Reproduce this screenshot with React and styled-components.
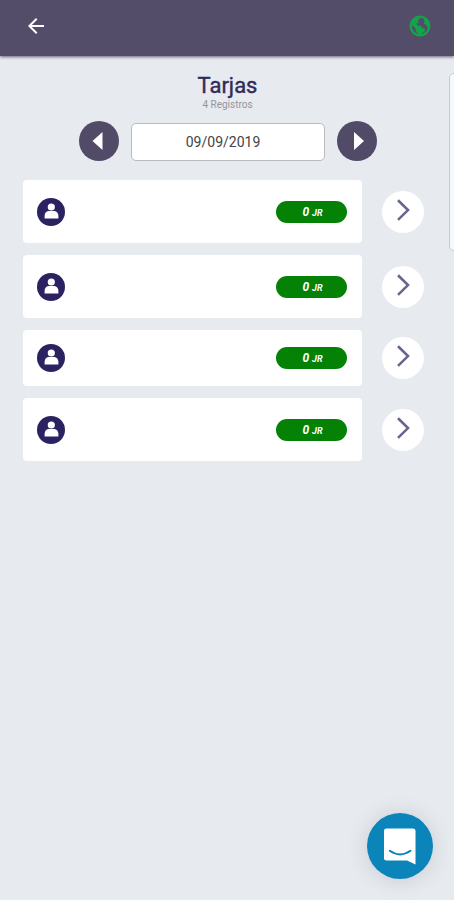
import React, { useState } from "react";
import styled, { createGlobalStyle } from "styled-components";
import { MdArrowBack } from "react-icons/md";

const GlobalStyle = createGlobalStyle`
  *, *::before, *::after { box-sizing: border-box; }
  body {
    margin: 0;
    background: #e7eaef;
    font-family: Roboto, "Liberation Sans", sans-serif;
    overflow-x: hidden;
  }
  button { border: 0; padding: 0; font: inherit; cursor: pointer; }
`;

const Page = styled.div`
  position: relative;
  min-height: 100vh;
  overflow: hidden;
  background: #e7eaef;
`;

const TopBar = styled.header`
  display: flex;
  align-items: center;
  justify-content: space-between;
  height: 56px;
  padding: 0 22px 4px 24px;
  background: #544d69;
  box-shadow: 0 1px 3px rgba(50, 40, 70, 0.7);
`;

const BarButton = styled.button`
  display: flex;
  background: none;
  color: ${({ $color }) => $color};
`;

const Heading = styled.div`
  display: flex;
  flex-direction: column;
  align-items: center;
  padding: 17px 0 0 1px;
`;

const Title = styled.h1`
  margin: 0;
  color: #312b5a;
  font-size: 22px;
  font-weight: 400;
  line-height: 26px;
  -webkit-text-stroke: 0.4px #312b5a;
`;

const Count = styled.p`
  margin: 0;
  color: #95969d;
  font-size: 10px;
  line-height: 12px;
`;

const DateNav = styled.div`
  display: flex;
  justify-content: center;
  align-items: center;
  gap: 12px;
  margin-top: 9px;
  padding: 0 24px 0 26px;
`;

const RoundButton = styled.button`
  display: flex;
  flex: none;
  width: 40px;
  height: 40px;
  border-radius: 50%;
  background: #514b68;
`;

const DateInput = styled.input`
  width: 194px;
  min-width: 0;
  height: 38px;
  margin-top: 3px;
  padding: 0 10px 0 0;
  border: 1px solid #b9bbc0;
  border-radius: 5px;
  background: #fff;
  color: #444;
  font-family: inherit;
  font-size: 14px;
  text-align: center;
`;

const List = styled.ul`
  display: flex;
  flex-direction: column;
  gap: 12px;
  margin: 0;
  padding: 19px 30px 24px 23px;
  list-style: none;
`;

const Row = styled.li`
  display: flex;
  align-items: center;
  gap: 20px;
`;

const Card = styled.div`
  display: flex;
  flex: 1;
  align-items: center;
  justify-content: space-between;
  height: ${({ $compact }) => ($compact ? 56 : 63)}px;
  padding: 0 15px 0 14px;
  border-radius: 4px;
  background: #fff;
`;

const Badge = styled.span`
  display: flex;
  align-items: baseline;
  justify-content: center;
  gap: 3px;
  width: 71px;
  height: 22px;
  padding-left: 2px;
  border-radius: 11px;
  background: #058205;
  color: #fff;
  font-size: 12px;
  font-style: italic;
  font-weight: 700;
  line-height: 23px;
`;

const Unit = styled.small`
  font-size: 9px;
`;

const OpenButton = styled.button`
  display: flex;
  flex: none;
  width: 42px;
  height: 42px;
  border-radius: 50%;
  background: #fff;
`;

const SidePanel = styled.aside`
  position: absolute;
  top: 73px;
  right: -15px;
  width: 20px;
  height: 178px;
  border: 1px solid #c9cad0;
  border-radius: 5px;
  background: #f7f8fa;
`;

const ChatButton = styled.button`
  position: fixed;
  right: 21px;
  bottom: 21px;
  display: flex;
  width: 66px;
  height: 66px;
  border-radius: 50%;
  background: #0a84b9;
  box-shadow: 0 1px 20px rgba(60, 60, 80, 0.18);
`;

function Globe() {
  return (
    <svg width="24" height="24" viewBox="0 0 24 24" aria-hidden="true">
      <circle cx="12" cy="12" r="9.4" fill="none" stroke="currentColor" strokeWidth="2.2" />
      <path
        d="M3.500 7.500 7 3.500l4-1.200.8 2.400-2 1.800 1 2-2.300 1.300.7 1.800 3.300.2 1.500 2.200 3 .8-.4 3-2.600 1.400-1 3h-2.600l-1-3.400-2-2 .4-2.400-4.600-4z"
        fill="currentColor"
      />
      <path
        d="M14.500 3l4.500 1.600 2.500 4.400.3 4-2.200.8-1.200-2.800-2.400-1.500.6-2.700z"
        fill="currentColor"
      />
    </svg>
  );
}

function Person() {
  return (
    <svg width="28" height="28" viewBox="0 0 28 28" aria-hidden="true">
      <circle cx="14" cy="14" r="14" fill="#2b2262" />
      <circle cx="14.3" cy="9" r="3.6" fill="#fff" />
      <path
        d="M7.6 20.500v-2.500c0-3.200 2-5 4.400-5h4.600c2.600 0 4.800 1.900 4.800 5v2.500z"
        fill="#fff"
      />
    </svg>
  );
}

function Triangle({ d }) {
  return (
    <svg width="40" height="40" viewBox="0 0 40 40" aria-hidden="true">
      <path d={d} fill="#fff" />
    </svg>
  );
}

function Chevron() {
  return (
    <svg width="42" height="42" viewBox="0 0 42 42" aria-hidden="true">
      <path
        d="M16 9.300 26 19.100 16 28.900"
        fill="none"
        stroke="#69658f"
        strokeWidth="2.6"
      />
    </svg>
  );
}

function ChatFace() {
  return (
    <svg width="66" height="66" viewBox="0 0 66 66" aria-hidden="true">
      <path
        d="M19.500 15.500h26.500a2.500 2.500 0 0 1 2.500 2.500v33.500l-8.500-4H19.500a2.500 2.500 0 0 1-2.500-2.500V18a2.500 2.500 0 0 1 2.500-2.500z"
        fill="#fff"
      />
      <path
        d="M22.800 37.800q10.200 7.200 20.700 0"
        fill="none"
        stroke="#0a84b9"
        strokeWidth="2"
        strokeLinecap="round"
      />
    </svg>
  );
}

const records = [
  { id: 1, days: 0 },
  { id: 2, days: 0 },
  { id: 3, days: 0, compact: true },
  { id: 4, days: 0 },
];

export default function App() {
  const [date, setDate] = useState("09/09/2019");

  return (
    <Page>
      <GlobalStyle />
      <TopBar>
        <BarButton type="button" aria-label="Volver" $color="#fff">
          <MdArrowBack size={24} />
        </BarButton>
        <BarButton type="button" aria-label="Conexión" $color="#12a34b">
          <Globe />
        </BarButton>
      </TopBar>
      <main>
        <Heading>
          <Title>Tarjas</Title>
          <Count>{records.length} Registros</Count>
        </Heading>
        <DateNav>
          <RoundButton type="button" aria-label="Día anterior">
            <Triangle d="M23.500 11v18L13.500 20z" />
          </RoundButton>
          <DateInput
            type="text"
            aria-label="Fecha"
            value={date}
            onChange={(event) => setDate(event.target.value)}
          />
          <RoundButton type="button" aria-label="Día siguiente">
            <Triangle d="M17 11v18l10-9z" />
          </RoundButton>
        </DateNav>
        <List>
          {records.map((record) => (
            <Row key={record.id}>
              <Card $compact={record.compact}>
                <Person />
                <Badge>
                  {record.days} <Unit>JR</Unit>
                </Badge>
              </Card>
              <OpenButton type="button" aria-label="Abrir registro">
                <Chevron />
              </OpenButton>
            </Row>
          ))}
        </List>
      </main>
      <SidePanel />
      <ChatButton type="button" aria-label="Abrir chat">
        <ChatFace />
      </ChatButton>
    </Page>
  );
}
